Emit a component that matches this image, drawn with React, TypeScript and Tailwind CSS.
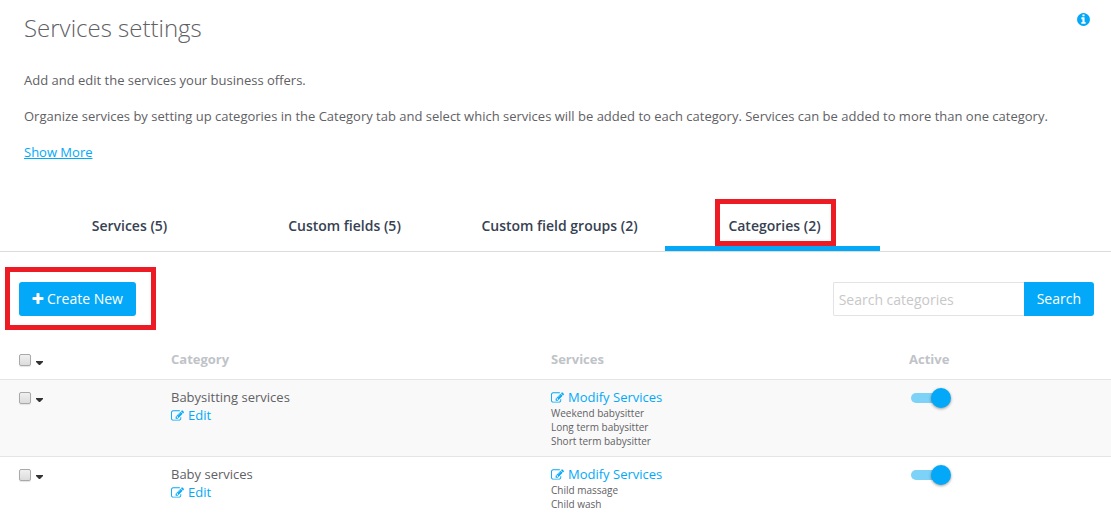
import React, { useState } from "react";

const tabs = [
  { id: "services", label: "Services (5)" },
  { id: "fields", label: "Custom fields (5)" },
  { id: "groups", label: "Custom field groups (2)" },
  { id: "categories", label: "Categories (2)" },
];

const categories = [
  {
    name: "Babysitting services",
    services: [
      "Weekend babysitter",
      "Long term babysitter",
      "Short term babysitter",
    ],
  },
  {
    name: "Baby services",
    services: ["Child massage", "Child wash"],
  },
];

function PlusIcon() {
  return (
    <svg viewBox="0 0 1792 1792" className="size-[14px]" fill="currentColor" aria-hidden="true">
      <path d="M1600 736v192q0 40-28 68t-68 28h-416v416q0 40-28 68t-68 28h-192q-40 0-68-28t-28-68v-416h-416q-40 0-68-28t-28-68v-192q0-40 28-68t68-28h416v-416q0-40 28-68t68-28h192q40 0 68 28t28 68v416h416q40 0 68 28t28 68z" />
    </svg>
  );
}

function EditIcon() {
  return (
    <svg viewBox="0 0 1792 1536" className="mt-px h-3 w-[13px]" fill="currentColor" aria-hidden="true">
      <path d="M888 1184l116-116-152-152-116 116v56h96v96h56zm440-720q-16-16-33 1l-350 350q-17 17-1 33t33-1l350-350q17-17 1-33zm80 594v190q0 119-84.5 203.5t-203.5 84.5h-832q-119 0-203.5-84.5t-84.5-203.5v-832q0-119 84.5-203.5t203.5-84.5h832q63 0 117 25 15 7 18 23 3 17-9 29l-49 49q-14 14-32 8-23-6-45-6h-832q-66 0-113 47t-47 113v832q0 66 47 113t113 47h832q66 0 113-47t47-113v-126q0-13 9-22l64-64q15-15 35-7t20 29zm-96-738l288 288-672 672h-288v-288zm444 132l-92 92-288-288 92-92q28-28 68-28t68 28l152 152q28 28 28 68t-28 68z" />
    </svg>
  );
}

function InfoIcon() {
  return (
    <svg viewBox="0 0 1792 1792" className="size-[15px]" fill="currentColor" aria-hidden="true">
      <path d="M1152 1376v-160q0-14-9-23t-23-9h-96v-512q0-14-9-23t-23-9h-320q-14 0-23 9t-9 23v160q0 14 9 23t23 9h96v320h-96q-14 0-23 9t-9 23v160q0 14 9 23t23 9h448q14 0 23-9t9-23zm-128-896v-160q0-14-9-23t-23-9h-192q-14 0-23 9t-9 23v160q0 14 9 23t23 9h192q14 0 23-9t9-23zm640 416q0 209-103 385.5t-279.5 279.5-385.5 103-385.5-103-279.5-279.5-103-385.5 103-385.5 279.5-279.5 385.5-103 385.5 103 279.5 279.5 103 385.5z" />
    </svg>
  );
}

function RowSelect({ label }: { label: string }) {
  return (
    <div className="flex h-5 items-center gap-1 pl-[19px]">
      <input
        type="checkbox"
        aria-label={label}
        className="size-3 appearance-none rounded-[2px] border border-[#a9a9a9] bg-linear-to-b from-[#f0f0f0] to-[#dcdcdc] shadow-[0_1px_1px_#e4e4e4] checked:from-[#03a9f8] checked:to-[#03a9f8]"
      />
      <button type="button" aria-label={label + " options"} className="pt-[5px] pl-px text-[#333]">
        <svg viewBox="0 0 7 4" className="h-1 w-[7px]" fill="currentColor" aria-hidden="true">
          <path d="M0 0h7v1L4 4H3L0 1z" />
        </svg>
      </button>
    </div>
  );
}

function Toggle({ label }: { label: string }) {
  return (
    <label className="relative ml-[2px] flex h-5 w-10 items-center">
      <input type="checkbox" role="switch" defaultChecked className="peer sr-only" aria-label={label} />
      <span className="h-[10px] w-9 rounded-full bg-[#ccc] peer-checked:bg-[#7dd2f7]" />
      <span className="absolute left-0 size-5 rounded-full bg-white shadow-[0_1px_3px_rgba(0,0,0,0.4)] peer-checked:left-5 peer-checked:bg-[#03a9f8]" />
    </label>
  );
}

export default function App() {
  const [active, setActive] = useState("categories");

  return (
    <div className="bg-white font-['Open_Sans',sans-serif] text-[13px] leading-[18px] text-[#5f6165]">
      <header className="pt-3 pr-5 pl-6">
        <div className="flex items-start justify-between">
          <h1 className="text-2xl leading-8 font-light">Services settings</h1>
          <button type="button" aria-label="Information" className="text-[#03a9f8]">
            <InfoIcon />
          </button>
        </div>
        <div className="flex flex-col items-start gap-[18px] pt-[27px]">
          <p>Add and edit the services your business offers.</p>
          <p>
            Organize services by setting up categories in the Category tab and
            select which services will be added to each category. Services can
            be added to more than one category.
          </p>
          <a href="#more" className="text-[#03a9f8] underline">
            Show More
          </a>
        </div>
      </header>

      <nav role="tablist" className="mt-10 flex border-b border-[#dcdcdc] pl-5">
        {tabs.map((tab) => (
          <button
            key={tab.id}
            type="button"
            role="tab"
            aria-selected={tab.id === active}
            onClick={() => setActive(tab.id)}
            className={
              "relative h-[50px] w-[215px] border-b-[5px] pt-1 pl-1 text-sm font-semibold text-[#364152] " +
              (tab.id === active ? "border-[#03a9f8]" : "border-transparent")
            }
          >
            {tab.label}
            {tab.id === "categories" && (
              <span className="absolute -top-[2px] left-[50px] h-[47px] w-[121px] border-[5px] border-[#ed1c24]" />
            )}
          </button>
        ))}
      </nav>

      <div className="flex items-center justify-between pt-[30px] pr-[17px] pl-[19px]">
        <div className="relative">
          <button
            type="button"
            className="flex h-[34px] items-center gap-[2px] rounded-[3px] bg-[#03a9f8] pr-[13px] pl-3 text-sm font-medium text-white"
          >
            <PlusIcon />
            Create New
          </button>
          <span className="pointer-events-none absolute -top-[15px] -left-[14px] h-[63px] w-[151px] border-[5px] border-[#ed1c24]" />
        </div>
        <form className="flex" onSubmit={(e) => e.preventDefault()}>
          <input
            type="text"
            aria-label="Search categories"
            placeholder="Search categories"
            className="h-[34px] w-[191px] rounded-l-[2px] border border-r-0 border-[#e3e3e3] px-[5px] text-sm outline-none placeholder:text-[#c8c8c8]"
          />
          <button
            type="submit"
            className="h-[34px] rounded-r-[3px] bg-[#03a9f8] px-[13px] text-sm font-medium text-white"
          >
            Search
          </button>
        </form>
      </div>

      <table className="mt-[26px] w-full table-fixed text-left">
        <thead className="text-[#c0c3c8]">
          <tr className="align-top">
            <th className="h-[37px] w-[171px] pt-2">
              <RowSelect label="Select all" />
            </th>
            <th className="w-[380px] pt-2 font-bold">Category</th>
            <th className="w-[358px] pt-2 font-bold">Services</th>
            <th className="pt-2 font-bold">Active</th>
          </tr>
        </thead>
        <tbody>
          {categories.map((category) => (
            <tr key={category.name} className="border-t border-[#e3e6e8] align-top odd:bg-[#f9f9f9]">
              <td className="py-2">
                <RowSelect label={"Select " + category.name} />
              </td>
              <td className="py-2">
                {category.name}
                <a href="#edit" className="flex items-center gap-1 text-[#03a9f8]">
                  <EditIcon />
                  Edit
                </a>
              </td>
              <td className="py-2">
                <a href="#modify" className="flex items-center gap-1 text-[#03a9f8]">
                  <EditIcon />
                  Modify Services
                </a>
                <ul className="text-[10px] leading-[14px]">
                  {category.services.map((service) => (
                    <li key={service}>{service}</li>
                  ))}
                </ul>
              </td>
              <td className="py-2">
                <Toggle label={category.name + " active"} />
              </td>
            </tr>
          ))}
        </tbody>
      </table>
    </div>
  );
}
